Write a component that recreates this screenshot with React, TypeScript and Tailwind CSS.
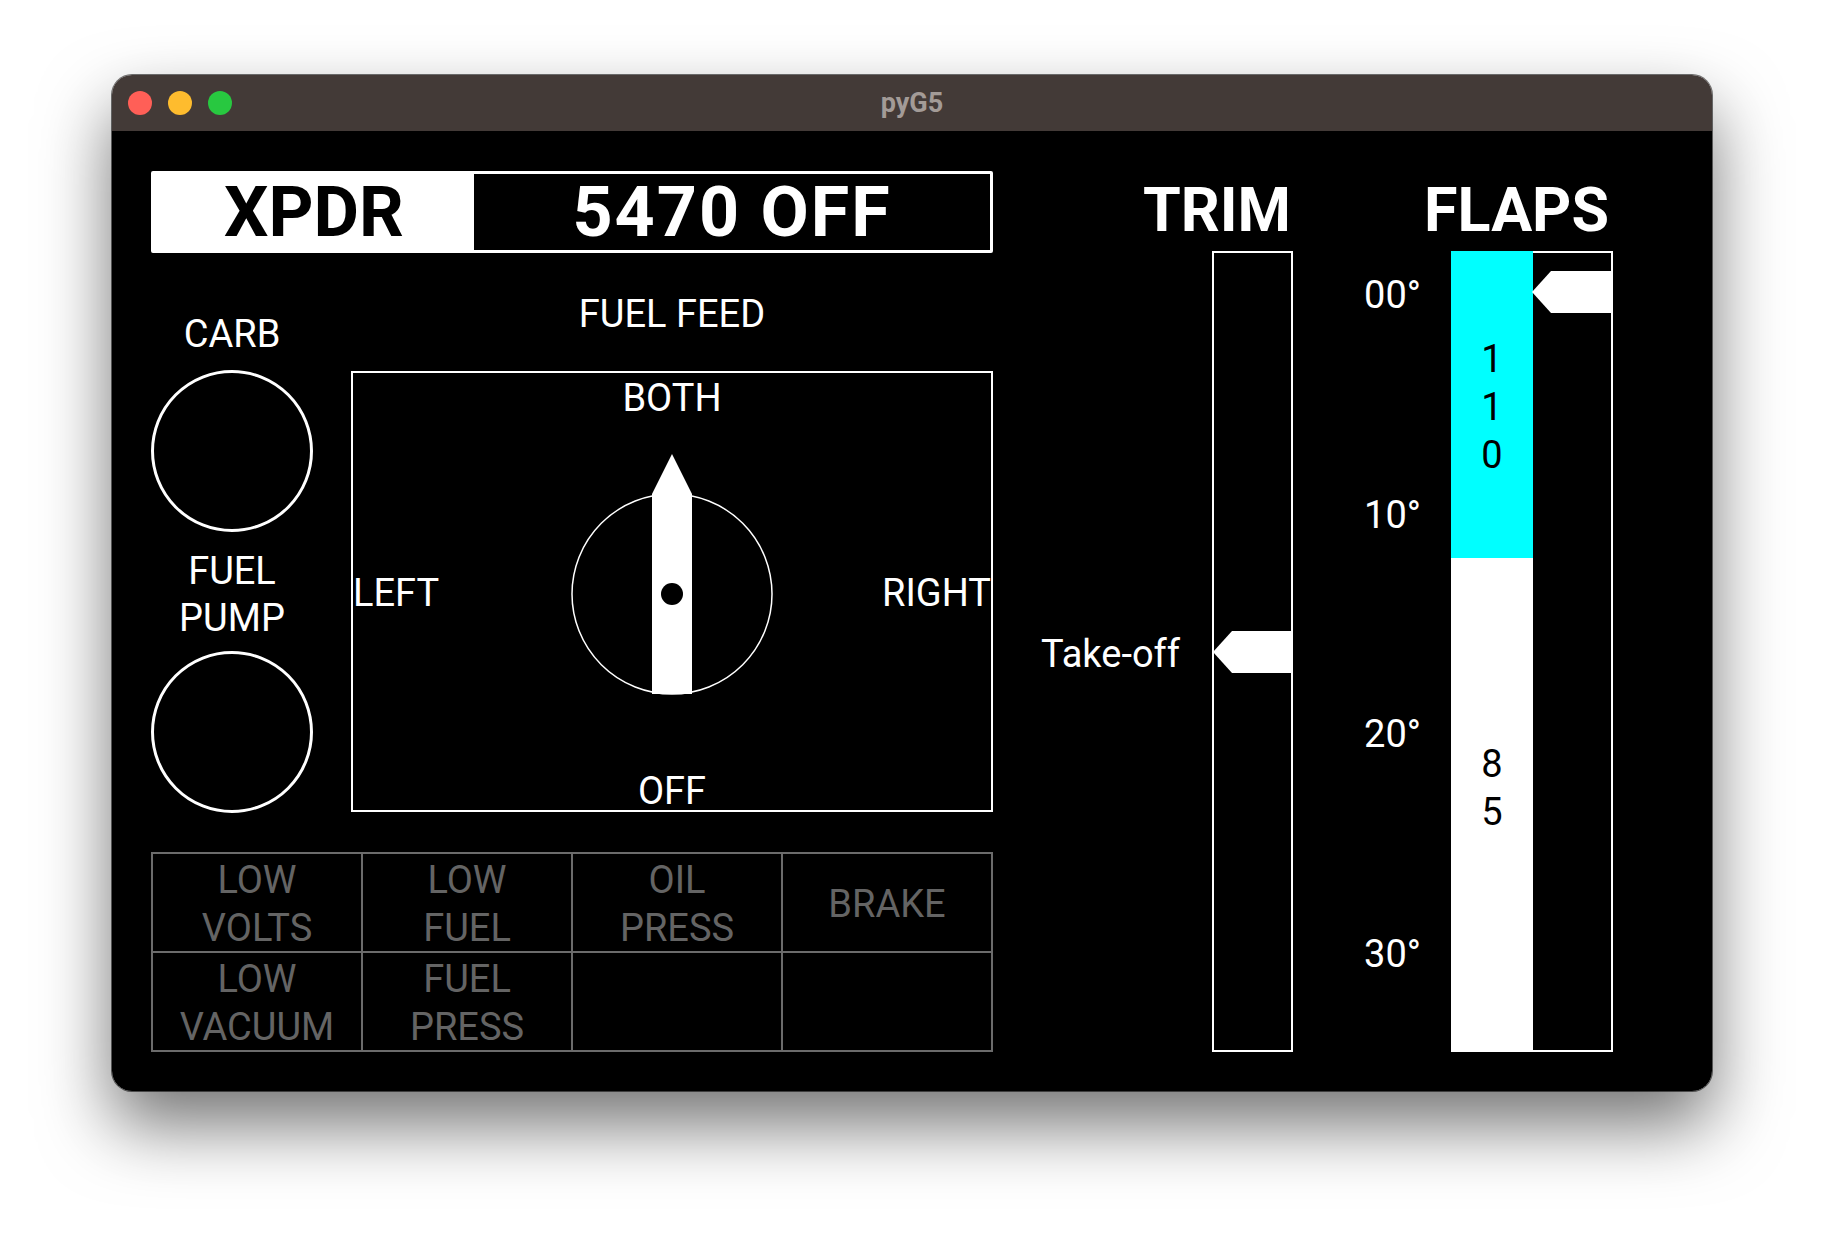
import React from 'react';

type Annunciator = { lines: string[] };

const annunciators: Annunciator[] = [
  { lines: ['LOW', 'VOLTS'] },
  { lines: ['LOW', 'FUEL'] },
  { lines: ['OIL', 'PRESS'] },
  { lines: ['BRAKE'] },
  { lines: ['LOW', 'VACUUM'] },
  { lines: ['FUEL', 'PRESS'] },
  { lines: [] },
  { lines: [] },
];

const flapMarks = ['00°', '10°', '20°', '30°'];

function Pointer() {
  return (
    <svg width="81" height="42" viewBox="0 0 81 42" className="block">
      <polygon points="1,21 20,0 81,0 81,42 20,42" fill="#ffffff" />
    </svg>
  );
}

function FuelSelector() {
  return (
    <svg width="204" height="284" viewBox="0 0 204 284" className="block">
      <circle cx="102" cy="142" r="100" fill="none" stroke="#ffffff" strokeWidth="1.5" />
      <polygon points="102,2 122,42 122,242 82,242 82,42" fill="#ffffff" />
      <circle cx="102" cy="142" r="11" fill="#000000" />
    </svg>
  );
}

export default function App() {
  return (
    <div className="min-h-screen w-full bg-white pl-[112px] pt-[75px]">
      <div className="w-[1600px] overflow-hidden rounded-[20px] shadow-[0_0_0_1px_rgba(0,0,0,0.55),0_34px_70px_rgba(0,0,0,0.55)]">
        {/* TITLE BAR */}
        <div className="grid h-[56px] grid-cols-[1fr_auto_1fr] items-center bg-[#433a37]">
          <div className="flex items-center gap-[16px] pl-[16px]">
            <span className="h-[24px] w-[24px] rounded-full bg-[#ff5f57]" />
            <span className="h-[24px] w-[24px] rounded-full bg-[#febc2e]" />
            <span className="h-[24px] w-[24px] rounded-full bg-[#28c840]" />
          </div>
          <span className="font-['Roboto',sans-serif] text-[27px] font-bold text-[#a39b97]">pyG5</span>
          <div />
        </div>

        {/* INSTRUMENT PANEL */}
        <div className="flex h-[960px] bg-black pl-[39px] pt-[40px] font-['Roboto',sans-serif] text-[38px] text-white">
          {/* LEFT COLUMN */}
          <div className="flex w-[842px] flex-col">
            <div className="flex h-[82px] rounded-[2px] border-[3px] border-white">
              <div className="flex w-[320px] items-center justify-center bg-white text-[70px] font-bold leading-none text-black">
                XPDR
              </div>
              <div className="flex flex-1 items-center justify-center text-[70px] font-bold leading-none tracking-[2px]">
                5470 OFF
              </div>
            </div>

            <div className="flex">
              {/* carb + fuel pump */}
              <div className="flex w-[162px] flex-col items-center">
                <div className="mt-[58px] h-[47px] leading-[47px]">CARB</div>
                <div className="mt-[12px] h-[162px] w-[162px] rounded-full border-[3px] border-white" />
                <div className="mt-[16px] text-center leading-[47px]">
                  FUEL
                  <br />
                  PUMP
                </div>
                <div className="mt-[9px] h-[162px] w-[162px] rounded-full border-[3px] border-white" />
              </div>

              {/* fuel feed */}
              <div className="ml-[38px] flex w-[642px] flex-col items-center">
                <div className="mt-[38px] h-[47px] leading-[47px]">FUEL FEED</div>
                <div className="mt-[33px] flex h-[441px] w-full flex-col border-2 border-white">
                  <div className="h-[47px] text-center leading-[51px]">BOTH</div>
                  <div className="grid flex-1 grid-cols-[1fr_auto_1fr] items-center pb-[3px]">
                    <span className="justify-self-start leading-[47px]">LEFT</span>
                    <FuelSelector />
                    <span className="justify-self-end leading-[47px]">RIGHT</span>
                  </div>
                  <div className="h-[40px] text-center leading-[42px]">OFF</div>
                </div>
              </div>
            </div>

            {/* annunciators */}
            <div className="mt-[39px] grid grid-cols-4 border-l-2 border-t-2 border-[#6b6b6b] text-[#646464]">
              {annunciators.map((a, i) => (
                <div
                  key={i}
                  className="flex h-[99px] flex-col items-center justify-center border-b-2 border-r-2 border-[#6b6b6b] pt-[2px] leading-[48px]"
                >
                  {a.lines.map((line) => (
                    <span key={line}>{line}</span>
                  ))}
                </div>
              ))}
            </div>
          </div>

          {/* TRIM */}
          <div className="flex w-[300px] flex-col items-end">
            <div className="h-[77px] pr-[2px] text-[61px] font-bold leading-[79px]">TRIM</div>
            <div className="mt-[3px] flex">
              <div className="mr-[32px] pt-[380px]">
                <div className="h-[47px] leading-[47px]">Take-off</div>
              </div>
              <div className="relative h-[801px] w-[81px] border-2 border-white">
                <div className="absolute -left-[2px] top-[378px]">
                  <Pointer />
                </div>
              </div>
            </div>
          </div>

          {/* FLAPS */}
          <div className="flex w-[320px] flex-col items-end">
            <div className="h-[77px] pr-[4px] text-[61px] font-bold leading-[79px]">FLAPS</div>
            <div className="mt-[3px] flex">
              <div className="mr-[30px] flex flex-col pt-[21px] text-right">
                {flapMarks.map((mark) => (
                  <div key={mark} className="h-[219.5px] leading-[47px]">
                    {mark}
                  </div>
                ))}
              </div>
              <div className="flex h-[801px] w-[162px]">
                <div className="flex w-[82px] flex-col text-black">
                  <div className="flex h-[307px] flex-col items-center justify-center bg-[#00ffff] pt-[5px] leading-[48px]">
                    <span>1</span>
                    <span>1</span>
                    <span>0</span>
                  </div>
                  <div className="flex flex-1 flex-col items-center justify-center bg-white pb-[35px] leading-[48px]">
                    <span>8</span>
                    <span>5</span>
                  </div>
                </div>
                <div className="relative flex-1 border-y-2 border-r-2 border-white">
                  <div className="absolute -left-[2px] top-[18px]">
                    <Pointer />
                  </div>
                </div>
              </div>
            </div>
          </div>
        </div>
      </div>
    </div>
  );
}
